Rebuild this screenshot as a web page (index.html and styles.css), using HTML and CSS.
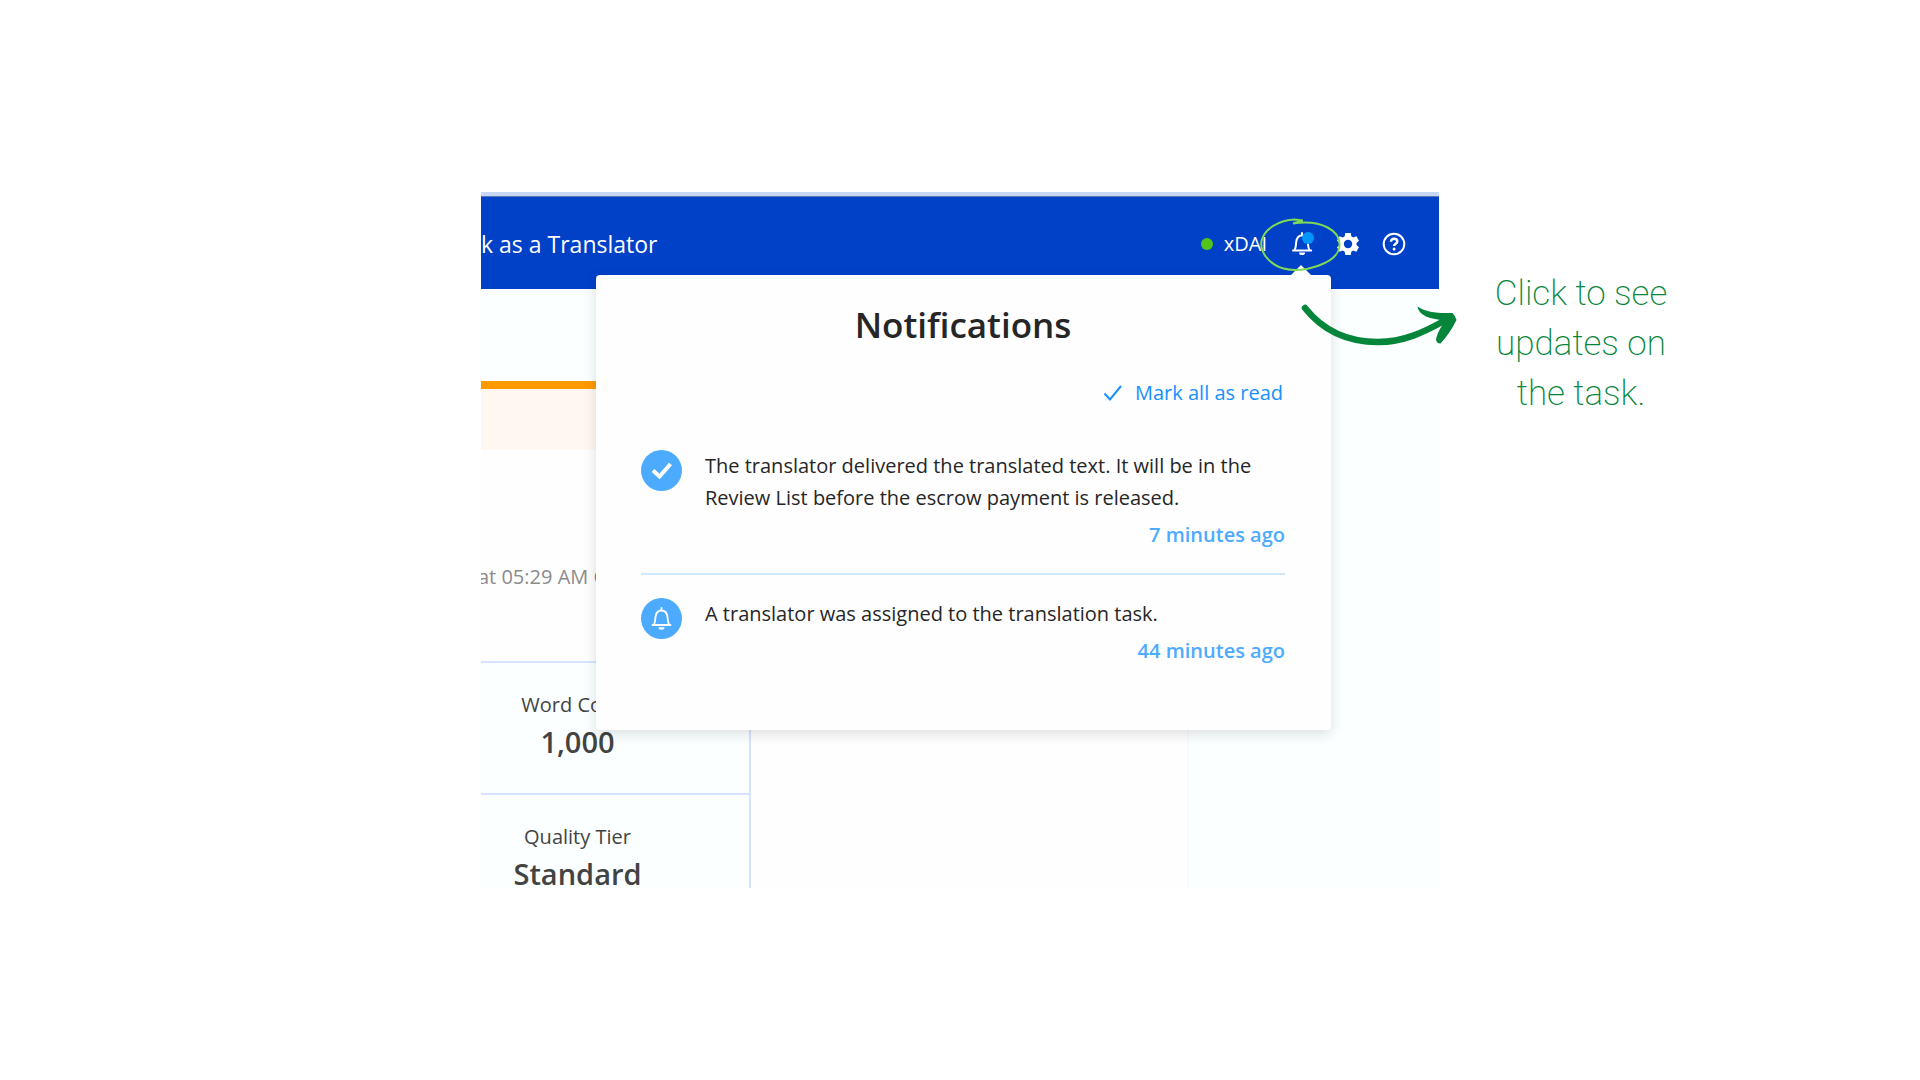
FILE: index.html
```html
<!DOCTYPE html>
<html lang="en">
<head>
<meta charset="utf-8">
<title>Notifications</title>
<link rel="stylesheet" href="styles.css">
</head>
<body>
<main class="stage">
  <section class="shot">
    <div class="screen">
      <header class="topbar">
        <a class="topbar-link" href="#">k as a Translator</a>
        <nav class="tools" aria-label="Account">
          <span class="network"><span class="dot"></span>xDAI</span>
          <button class="tool bell-tool" type="button" aria-label="Notifications">
            <svg width="22" height="24" viewBox="0 0 22 24"><path d="M2 18.500h18.200M3.500 18c1.500-2 1.200-4 1.700-8C5.700 6 7.500 3.500 11 3.500S16.300 6 16.800 10c.5 4 .2 6 1.700 8M11 1v2.500" fill="none" stroke="#fff" stroke-width="2" stroke-linecap="round"/><path d="M8 20.500h6a3 2.600 0 0 1-6 0z" fill="#fff"/></svg>
            <span class="badge"></span>
          </button>
          <button class="tool" type="button" aria-label="Settings">
            <svg width="24" height="24" viewBox="0 0 24 24"><path fill="#fff" fill-rule="evenodd" d="M9.300 1h5.400l.6 3.300 1.900 1.100 3.200-1.200 2.600 4.600-2.500 2.100v2.200l2.500 2.100-2.600 4.600-3.200-1.200-1.900 1.100-.6 3.300H9.300l-.6-3.300-1.900-1.100-3.200 1.200L1 15.200l2.500-2.100v-2.200L1 8.800l2.600-4.600 3.200 1.200 1.900-1.100zM12 7.800a4.200 4.200 0 1 0 0 8.400 4.200 4.200 0 0 0 0-8.400z"/></svg>
          </button>
          <button class="tool" type="button" aria-label="Help">
            <svg width="24" height="24" viewBox="0 0 24 24" fill="none" stroke="#fff"><circle cx="12" cy="12" r="10.300" stroke-width="2"/><path d="M8.900 9.700c0-4.100 6.400-3.900 6.400-.2 0 2.200-3.200 2.300-3.200 4.600" stroke-width="2.400"/><circle cx="12.100" cy="17" r="1.500" fill="#fff" stroke="none"/></svg>
          </button>
        </nav>
      </header>
      <div class="body">
        <div class="panel">
          <div class="alert"></div>
          <p class="stamp">at 05:29 AM GMT</p>
          <dl class="facts">
            <div class="fact"><dt>Word Count</dt><dd>1,000</dd></div>
            <div class="fact"><dt>Quality Tier</dt><dd>Standard</dd></div>
          </dl>
        </div>
      </div>
    </div>

    <section class="popover" aria-labelledby="popover-title">
      <h1 id="popover-title">Notifications</h1>
      <button class="mark" type="button">
        <svg width="20" height="18" viewBox="0 0 20 18"><path d="M1.500 9.500l5.500 6L18 2" fill="none" stroke="#1890ff" stroke-width="2"/></svg>
        Mark all as read
      </button>
      <ul class="list">
        <li class="item">
          <span class="avatar"><svg width="41" height="41" viewBox="0 0 41 41"><path d="M12 20.500l6.500 6L29.500 14" fill="none" stroke="#fff" stroke-width="4"/></svg></span>
          <div class="message"><p>The translator delivered the translated text. It will be in the Review List before the escrow payment is released.</p><time>7 minutes ago</time></div>
        </li>
        <li class="item">
          <span class="avatar"><svg width="41" height="41" viewBox="0 0 41 41"><path d="M11.500 27h18M13 26.500c1.300-2 1-4 1.500-7.500.5-4 2.500-6.500 6-6.500s5.500 2.500 6 6.500c.5 3.500.2 5.500 1.500 7.500M20.500 10v2" fill="none" stroke="#fff" stroke-width="1.800" stroke-linecap="round"/><path d="M17.500 29.300h6a3 2.500 0 0 1-6 0z" fill="#fff"/></svg></span>
          <div class="message"><p>A translator was assigned to the translation task.</p><time>44 minutes ago</time></div>
        </li>
      </ul>
    </section>

    <svg class="ring" width="84" height="56" viewBox="0 0 84 56" fill="none" stroke="#7ed957" stroke-width="2"><path d="M44 2.500L36 1.500C20 2 5 11 2.500 23c-2 12 9 24 22 27.500 20 5 54-5 56-22C82 13 63 1 34 5.500l9-3"/></svg>
    <svg class="arrow" width="158" height="46" viewBox="0 0 158 46"><path d="M5 6C24 30 50 40 78 40c26 0 46-10 66-21" fill="none" stroke="#04853a" stroke-width="6.500" stroke-linecap="round"/><path d="M117.500 4.500c9 6 20 7 35 6.500q3 3 4 7-7 14-16 23.500-4 0-4.500-4 1-6 6-14l4-5q-12-1-20-4-8-4-8.500-10z" fill="#04853a"/></svg>
  </section>
  <p class="caption">Click to see updates on the task.</p>
</main>
</body>
</html>
```
FILE: styles.css
```css
* { box-sizing: border-box; }
body, h1, p, ul, dl, dd { margin: 0; padding: 0; }
body {
  background: #fff;
  color: #262626;
  font-family: "Open Sans", sans-serif;
  font-size: 20px;
  line-height: 32px;
}
button {
  padding: 0;
  border: 0;
  background: none;
  font: inherit;
  cursor: pointer;
}
svg { display: block; }

.stage {
  display: grid;
  grid-template-columns: minmax(0, 1fr) minmax(0, 2fr) minmax(0, 1fr);
  align-items: center;
  min-height: 100vh;
}
.shot {
  position: relative;
  grid-column: 2;
  margin: 0 1px;
}
.screen { overflow: hidden; white-space: nowrap; }

.topbar {
  display: flex;
  align-items: center;
  justify-content: space-between;
  height: 97px;
  padding: 2px 33px 0 0;
  border-top: 4px solid #c5d7f3;
  background: #0041c8;
  box-shadow: inset 0 1px #5a78ad;
}
.topbar-link {
  color: #fff;
  font-size: 23px;
  text-decoration: none;
}
.tools { display: flex; align-items: center; gap: 22px; color: #fff; }
.network { display: flex; align-items: center; gap: 11px; }
.dot { width: 12px; height: 12px; border-radius: 50%; background: #52c41a; }
.tool { position: relative; }
.bell-tool { margin: 0 1px 0 2px; }
.badge {
  position: absolute;
  top: 0;
  right: -1px;
  width: 12px;
  height: 12px;
  border-radius: 50%;
  background: #0096ff;
}

.body { padding-top: 92px; background: #fbffff; }
.panel { margin-right: 250px; border-right: 2px solid #f7fbff; background: #fefefe; }
.alert { height: 69px; border-top: 8px solid #ff9900; background: #fff8f0; }
.stamp { padding: 111px 0 68px; margin-left: -3px; color: #8c8c8c; }
.facts { width: 270px; border-right: 2px solid #d6e4ff; background: #fbffff; color: #434343; text-align: center; }
.fact { height: 132px; padding: 26px 75px 0 0; border-top: 2px solid #d6e4ff; }
.fact:last-child { height: 95px; }
.fact dd { font-size: 29px; font-weight: 600; line-height: 42px; }

.popover {
  position: absolute;
  top: 83px;
  right: 108px;
  width: 735px;
  min-height: 455px;
  padding: 24px 46px 0 45px;
  border-radius: 4px;
  background: #fefefe;
  box-shadow: 0 4px 14px rgba(0, 0, 0, .13);
}
.popover::before {
  content: "";
  position: absolute;
  top: -10px;
  right: 19px;
  border: 11px solid transparent;
  border-top: 0;
  border-bottom-color: #fff;
}
.popover h1 { font-size: 35px; font-weight: 600; line-height: 52px; text-align: center; }
.mark { display: flex; align-items: center; gap: 12px; margin: 26px 2px 0 auto; color: #1890ff; }
.list { margin-top: 41px; list-style: none; }
.item { display: flex; gap: 23px; padding-bottom: 22px; }
.item + .item { padding-top: 23px; border-top: 2px solid #cfe8ff; }
.avatar { flex: none; width: 41px; height: 41px; border-radius: 50%; background: #4dabff; }
.message { flex: 1; }
.message time { display: block; margin-top: 5px; color: #4dabff; font-weight: 600; text-align: right; }

.ring { position: absolute; top: 26px; right: 96px; }
.arrow { position: absolute; top: 110px; right: -19px; }

.caption {
  justify-self: start;
  width: 200px;
  margin: 0 0 392px 41px;
  color: #04853a;
  font-family: Roboto, sans-serif;
  font-size: 35px;
  font-weight: 200;
  line-height: 50px;
  text-align: center;
}
```
